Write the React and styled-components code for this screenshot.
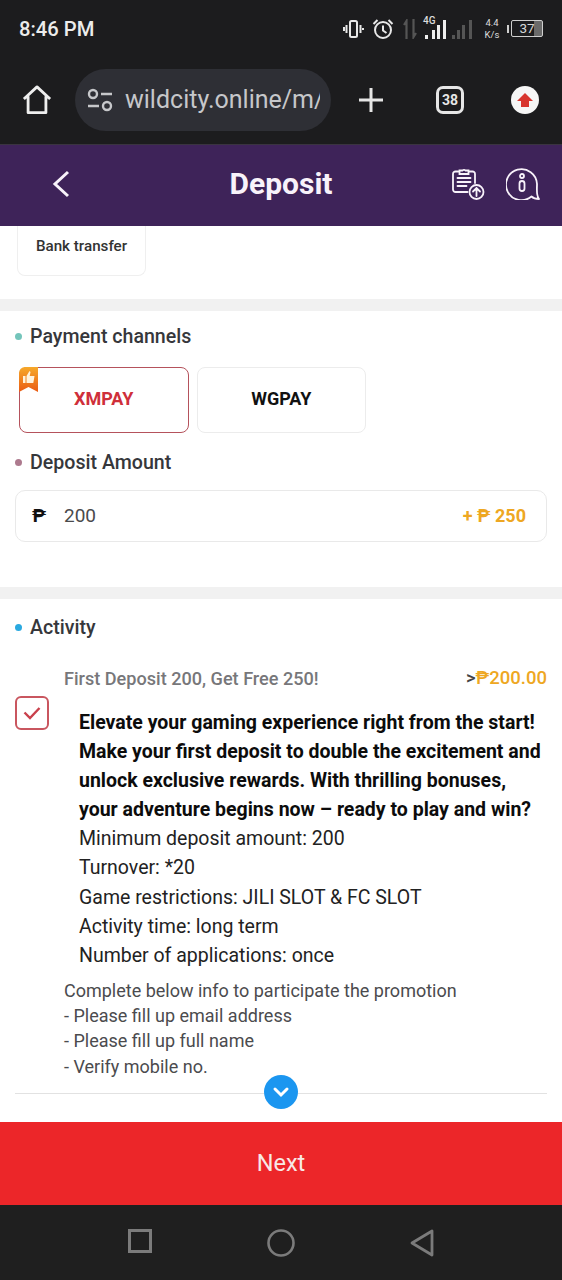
import React from 'react'
import styled, { createGlobalStyle } from 'styled-components'

const GlobalStyle = createGlobalStyle`
  html, body {
    margin: 0;
    padding: 0;
    background: #fff;
    font-family: Roboto, "Liberation Sans", sans-serif;
  }
  * { box-sizing: border-box; }
`

const Page = styled.div`
  width: 562px;
  height: 1280px;
  display: flex;
  flex-direction: column;
  overflow: hidden;
  background: #fff;
`

const TopDark = styled.div`
  height: 145px;
  background: #1c1c1e;
  border-bottom: 1px solid #3a3440;
  flex-shrink: 0;
`

const StatusBar = styled.div`
  height: 66px;
  display: flex;
  align-items: center;
  justify-content: space-between;
  padding: 0 19px 9px;
  color: #ececec;
`

const Clock = styled.span`
  font-size: 20.2px;
  font-weight: 500;
`

const StatusIcons = styled.div`
  display: flex;
  align-items: center;
`

const NetSpeed = styled.div`
  width: 14px;
  display: flex;
  flex-direction: column;
  align-items: center;
  font-size: 9.5px;
  line-height: 12px;
  margin: 0 12px;
  color: #ddd;
`

const SignalWrap = styled.div`
  position: relative;
  width: 50px;
  height: 22px;
  margin-left: 6px;
  span {
    position: absolute;
    left: 0;
    top: -3px;
    font-size: 10px;
    font-weight: 500;
    color: #ddd;
  }
`

const Battery = styled.div`
  position: relative;
  width: 32px;
  height: 17px;
  border: 1px solid #cfcfcf;
  border-radius: 2px;
  font-size: 13.5px;
  line-height: 15px;
  text-align: center;
  color: #d8d8d8;
  background: linear-gradient(90deg, transparent 72%, #6a6a6a 72%);
  &::before {
    content: '';
    position: absolute;
    left: -5px;
    top: 4px;
    width: 2px;
    height: 8px;
    background: #cfcfcf;
  }
`

const BrowserBar = styled.div`
  height: 78px;
  display: flex;
  align-items: center;
  padding: 0 0 11px 22px;
`

const UrlPill = styled.div`
  width: 256px;
  height: 62px;
  margin-left: 23px;
  background: #2e2f35;
  border-radius: 31px;
  display: flex;
  align-items: center;
  padding-left: 12px;
  color: #c6c7ca;
  font-size: 25px;
`

const UrlText = styled.span`
  width: 195px;
  margin-left: 12px;
  overflow: hidden;
  white-space: nowrap;
`

const BarIcons = styled.div`
  display: flex;
  align-items: center;
  margin-left: 27px;
`

const TabCount = styled.div`
  width: 28px;
  height: 28px;
  margin-left: 52px;
  border: 3px solid #e6e6e6;
  border-radius: 7px;
  color: #e6e6e6;
  font-size: 14px;
  font-weight: 700;
  line-height: 22px;
  text-align: center;
`

const UploadBadge = styled.div`
  width: 28px;
  height: 28px;
  margin-left: 47px;
  border-radius: 50%;
  background: #f6f6f6;
  display: flex;
  align-items: center;
  justify-content: center;
`

const Header = styled.header`
  height: 81px;
  flex-shrink: 0;
  background: #3e2359;
  display: grid;
  grid-template-columns: 1fr auto 1fr;
  align-items: center;
  color: #f8f2fa;
  padding: 0 22px 4px;
`

const BackIcon = styled.svg`
  margin-left: 28px;
`

const HeaderTitle = styled.h1`
  margin: 0;
  font-size: 30px;
  font-weight: 700;
`

const HeaderIcons = styled.div`
  display: flex;
  justify-content: flex-end;
  gap: 21px;
`

const MethodSection = styled.section`
  height: 73px;
  flex-shrink: 0;
  padding-left: 17px;
`

const MethodCard = styled.div`
  width: 129px;
  height: 50px;
  border: 1px solid #efefef;
  border-top: none;
  border-radius: 0 0 8px 8px;
  padding-top: 11px;
  text-align: center;
  font-size: 15.2px;
  font-weight: 500;
  color: #333;
`

const Band = styled.div`
  height: 12px;
  flex-shrink: 0;
  background: #f1f1f1;
`

const ChannelSection = styled.section`
  height: 276px;
  flex-shrink: 0;
  padding: 13px 15px 0;
`

const SectionLabel = styled.div`
  display: flex;
  align-items: center;
  gap: 8px;
  height: 24px;
  font-size: 19.6px;
  font-weight: 500;
  color: #36373b;
  &::before {
    content: '';
    width: 7px;
    height: 7px;
    border-radius: 50%;
    background: ${p => p.$dot};
  }
`

const ChannelRow = styled.div`
  display: flex;
  gap: 8px;
  margin: 19px 0 17px 4px;
`

const ChannelCard = styled.div`
  position: relative;
  width: 169.5px;
  height: 66px;
  padding-bottom: 3px;
  border-radius: 8px;
  border: 1px solid ${p => (p.$active ? '#b5525c' : '#ececec')};
  display: flex;
  align-items: center;
  justify-content: center;
  font-size: 18px;
  font-weight: 700;
  color: ${p => (p.$active ? '#cf2f3a' : '#111')};
`

const Ribbon = styled.svg`
  position: absolute;
  left: -1px;
  top: -1px;
`

const AmountBox = styled.div`
  height: 52px;
  margin-top: 16px;
  border: 1px solid #e9e9e9;
  border-radius: 10px;
  display: flex;
  align-items: center;
  padding: 0 20px 2px 16px;
  font-size: 19px;
  color: #4a4a4c;
`

const Peso = styled.span`
  width: 32px;
  font-size: 19px;
  font-weight: 700;
  color: #111;
`

const Bonus = styled.span`
  margin-left: auto;
  font-size: 18px;
  font-weight: 700;
  color: #eea722;
`

const ActivitySection = styled.section`
  position: relative;
  flex: 1;
  padding: 16px 15px 0;
`

const ActivityGrid = styled.div`
  display: grid;
  grid-template-columns: 49px 1fr;
  margin-top: 27px;
`

const CheckBox = styled.div`
  width: 34px;
  height: 34px;
  margin-top: 30px;
  border: 2px solid #c9565f;
  border-radius: 6px;
  display: flex;
  align-items: center;
  justify-content: center;
`

const OfferHead = styled.div`
  display: flex;
  justify-content: space-between;
  align-items: center;
  height: 26px;
  padding-bottom: 2px;
  font-size: 18.1px;
  font-weight: 500;
  color: #77777a;
`

const OfferPrice = styled.span`
  font-size: 18.5px;
  color: #eea722;
  b {
    font-weight: 500;
    color: #444;
  }
`

const OfferBody = styled.div`
  margin: 16px 0 0 15px;
  font-size: 19.5px;
  line-height: 29.1px;
  color: #222;
`

const Strong = styled.div`
  font-weight: 700;
  color: #0c0c0c;
`

const Notes = styled.div`
  margin-top: 8px;
  font-size: 18px;
  line-height: 25.3px;
  color: #4b4b4e;
`

const Divider = styled.div`
  position: absolute;
  left: 15px;
  right: 15px;
  top: 494px;
  height: 1px;
  background: #e2e2e2;
`

const ExpandButton = styled.div`
  position: absolute;
  left: 264px;
  top: 476px;
  width: 34px;
  height: 34px;
  border-radius: 50%;
  background: #1b96f0;
  display: flex;
  align-items: center;
  justify-content: center;
`

const NextButton = styled.button`
  height: 83px;
  flex-shrink: 0;
  border: none;
  background: #ec2629;
  color: #f8e9e6;
  font-family: inherit;
  font-size: 23.5px;
  padding: 0 0 2px;
`

const NavBar = styled.nav`
  height: 75px;
  flex-shrink: 0;
  background: #1f1f1f;
  display: flex;
  align-items: flex-start;
  justify-content: center;
  gap: 115px;
  padding-top: 24px;
`

function App() {
  return (
    <Page>
      <GlobalStyle />
      <TopDark>
        <StatusBar>
          <Clock>8:46 PM</Clock>
          <StatusIcons>
            <svg width="21" height="18" viewBox="0 0 21 18" fill="none" stroke="#e8e8e8">
              <rect x="7" y="1" width="7" height="16" rx="1.5" strokeWidth="2" />
              <path d="M3.5 5v8M1 7v4M17.5 5v8M20 8v2" strokeWidth="2" />
            </svg>
            <svg width="22" height="22" viewBox="0 0 22 22" fill="none" stroke="#e8e8e8" strokeWidth="2" style={{ marginLeft: 8 }}>
              <circle cx="11" cy="12" r="8" />
              <path d="M11 7.500v5l3.500 2.500M1.500 6l4-4M20.500 6l-4-4" />
            </svg>
            <svg width="14" height="20" viewBox="0 0 14 20" fill="none" stroke="#555" strokeWidth="2.200" style={{ marginLeft: 9 }}>
              <path d="M3.500 20V2L1 6M10.500 0v18l2.500-4" />
            </svg>
            <SignalWrap>
              <span>4G</span>
              <svg width="50" height="22" viewBox="0 0 50 22">
                <rect x="2" y="17" width="3" height="4" fill="#eee" />
                <rect x="9" y="12" width="3" height="9" fill="#eee" />
                <rect x="14" y="7" width="3" height="14" fill="#eee" />
                <rect x="20" y="2" width="3" height="19" fill="#eee" />
                <rect x="29" y="17" width="3" height="4" fill="#555" />
                <rect x="34" y="12" width="3" height="9" fill="#555" />
                <rect x="39" y="7" width="3" height="14" fill="#555" />
                <rect x="46" y="2" width="3" height="19" fill="#555" />
              </svg>
            </SignalWrap>
            <NetSpeed>
              <span>4.4</span>
              <span>K/s</span>
            </NetSpeed>
            <Battery>37</Battery>
          </StatusIcons>
        </StatusBar>
        <BrowserBar>
          <svg width="30" height="30" viewBox="0 0 32 32" fill="none" stroke="#eee" strokeWidth="3" strokeLinejoin="round">
            <path d="M2 15 16 2l14 13M6.500 12v17.500h19V12" />
          </svg>
          <UrlPill>
            <svg width="26" height="24" viewBox="0 0 26 24" fill="none" stroke="#c6c7ca" strokeWidth="2.400">
              <circle cx="6" cy="6" r="4" />
              <path d="M14 6h11M1 18h11" />
              <circle cx="20" cy="18" r="4" />
            </svg>
            <UrlText>wildcity.online/m/</UrlText>
          </UrlPill>
          <BarIcons>
            <svg width="26" height="26" viewBox="0 0 26 26" stroke="#e6e6e6" strokeWidth="3">
              <path d="M13 1v24M1 13h24" />
            </svg>
            <TabCount>38</TabCount>
            <UploadBadge>
              <svg width="18" height="18" viewBox="0 0 18 18">
                <path d="M9 2 17 10h-4v6H5v-6H1z" fill="#d8352e" />
              </svg>
            </UploadBadge>
          </BarIcons>
        </BrowserBar>
      </TopDark>
      <Header>
        <BackIcon width="24" height="30" viewBox="0 0 24 30" fill="none" stroke="#f8f2fa" strokeWidth="3">
          <path d="M18 3 5 15l13 12" />
        </BackIcon>
        <HeaderTitle>Deposit</HeaderTitle>
        <HeaderIcons>
          <svg width="34" height="33" viewBox="0 0 33 33" fill="none" stroke="#f8f2fa" strokeWidth="1.800" strokeLinecap="round">
            <path d="M16 25H4a2.500 2.500 0 0 1-2.500-2.500V7A2.500 2.500 0 0 1 4 4.500h3M18 4.500h3A2.500 2.500 0 0 1 23.500 7v9" />
            <path d="M8 7V3.500h3a2 2 0 0 1 3 0h3V7H8z" />
            <path d="M6 11h13M6 15h13M6 19h9" />
            <circle cx="25" cy="25" r="7" />
            <path d="M25 29v-8M21.500 24.500l3.500-3.500 3.500 3.500" />
          </svg>
          <svg width="34" height="33" viewBox="0 0 34 33" fill="none" stroke="#f8f2fa" strokeWidth="1.800" strokeLinejoin="round">
            <path d="M33 32C29.500 32 27 31 25.500 29.500A15.500 15.500 0 1 1 31 17C31 23 30 28 33 32z" />
            <circle cx="16" cy="9" r="2" />
            <rect x="13.500" y="14" width="5" height="10" rx="2.500" />
          </svg>
        </HeaderIcons>
      </Header>
      <MethodSection>
        <MethodCard>Bank transfer</MethodCard>
      </MethodSection>
      <Band />
      <ChannelSection>
        <SectionLabel $dot="#74c5bb">Payment channels</SectionLabel>
        <ChannelRow>
          <ChannelCard $active>
            <Ribbon width="20" height="26" viewBox="0 0 20 26">
              <defs>
                <linearGradient id="ribbonFill" x1="0" y1="0" x2="0" y2="1">
                  <stop offset="0" stopColor="#f6a92a" />
                  <stop offset="1" stopColor="#ea5c14" />
                </linearGradient>
              </defs>
              <path d="M6 0h13v25l-9.500-5L0 25V6a6 6 0 0 1 6-6z" fill="url(#ribbonFill)" />
              <path d="M4 9h2.500v7H4zM7.500 9l3-5 1 1-.8 4h4.800l-1.200 7H7.500z" fill="#fff3dc" />
            </Ribbon>
            XMPAY
          </ChannelCard>
          <ChannelCard>WGPAY</ChannelCard>
        </ChannelRow>
        <SectionLabel $dot="#ad7a8e">Deposit Amount</SectionLabel>
        <AmountBox>
          <Peso>₱</Peso>
          200
          <Bonus>+ ₱ 250</Bonus>
        </AmountBox>
      </ChannelSection>
      <Band />
      <ActivitySection>
        <SectionLabel $dot="#2aa9e0">Activity</SectionLabel>
        <ActivityGrid>
          <div>
            <CheckBox>
              <svg width="20" height="16" viewBox="0 0 20 16" fill="none" stroke="#c9404c" strokeWidth="2.400">
                <path d="M2.500 7.500 8 13 17.500 3" />
              </svg>
            </CheckBox>
          </div>
          <div>
            <OfferHead>
              First Deposit 200, Get Free 250!
              <OfferPrice>
                <b>&gt;</b>₱200.00
              </OfferPrice>
            </OfferHead>
            <OfferBody>
              <Strong>
                Elevate your gaming experience right from the start! Make your first deposit to double the excitement and unlock exclusive rewards. With thrilling bonuses, your adventure begins now – ready to play and win?
              </Strong>
              <div>Minimum deposit amount: 200</div>
              <div>Turnover: *20</div>
              <div>Game restrictions: JILI SLOT &amp; FC SLOT</div>
              <div>Activity time: long term</div>
              <div>Number of applications: once</div>
            </OfferBody>
            <Notes>
              <div>Complete below info to participate the promotion</div>
              <div>- Please fill up email address</div>
              <div>- Please fill up full name</div>
              <div>- Verify mobile no.</div>
            </Notes>
          </div>
        </ActivityGrid>
        <Divider />
        <ExpandButton>
          <svg width="18" height="12" viewBox="0 0 18 12" fill="none" stroke="#fff" strokeWidth="3" strokeLinecap="round">
            <path d="M3 3l6 6 6-6" />
          </svg>
        </ExpandButton>
      </ActivitySection>
      <NextButton>Next</NextButton>
      <NavBar>
        <svg width="24" height="24" viewBox="0 0 24 24" fill="none" stroke="#7b7b7b" strokeWidth="3">
          <rect x="1.500" y="1.500" width="21" height="21" />
        </svg>
        <svg width="28" height="28" viewBox="0 0 28 28" fill="none" stroke="#7b7b7b" strokeWidth="2.600">
          <circle cx="14" cy="14" r="12.500" />
        </svg>
        <svg width="24" height="28" viewBox="0 0 24 28" fill="none" stroke="#7b7b7b" strokeWidth="2.800" strokeLinejoin="round">
          <path d="M22 2v24L2 14z" />
        </svg>
      </NavBar>
    </Page>
  )
}

export default App
